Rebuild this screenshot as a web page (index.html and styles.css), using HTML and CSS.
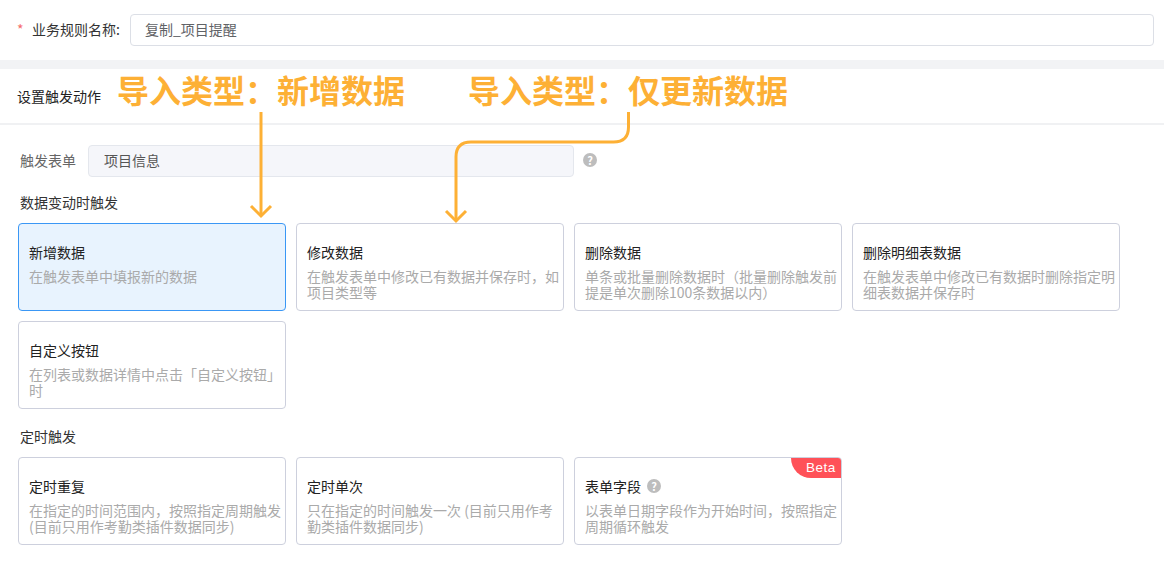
FILE: index.html
```html
<!DOCTYPE html>
<html lang="zh-CN">
<head>
<meta charset="utf-8">
<title>业务规则</title>
<link rel="stylesheet" href="styles.css">
</head>
<body>
<div class="page">
  <section class="name-row">
    <span class="req">*</span>
    <label class="name-label">业务规则名称:</label>
    <div class="name-input">复制_项目提醒</div>
  </section>
  <div class="band"></div>
  <header class="head">设置触发动作</header>
  <section class="body">
    <div class="form-row">
      <span class="form-label">触发表单</span>
      <div class="form-input">项目信息</div>
      <span class="help help-form">?</span>
    </div>
    <h3 class="group group-data">数据变动时触发</h3>
    <div class="cards">
      <div class="card active"><div class="title">新增数据</div><div class="desc">在触发表单中填报新的数据</div></div>
      <div class="card"><div class="title">修改数据</div><div class="desc">在触发表单中修改已有数据并保存时&#xFF0C;如项目类型等</div></div>
      <div class="card"><div class="title">删除数据</div><div class="desc">单条或批量删除数据时&#xFF08;批量删除触发前提是单次删除100条数据以内&#xFF09;</div></div>
      <div class="card"><div class="title">删除明细表数据</div><div class="desc">在触发表单中修改已有数据时删除指定明细表数据并保存时</div></div>
      <div class="card"><div class="title">自定义按钮</div><div class="desc">在列表或数据详情中点击「自定义按钮」时</div></div>
    </div>
    <h3 class="group group-timer">定时触发</h3>
    <div class="cards">
      <div class="card"><div class="title">定时重复</div><div class="desc">在指定的时间范围内&#xFF0C;按照指定周期触发 (目前只用作考勤类插件数据同步)</div></div>
      <div class="card"><div class="title">定时单次</div><div class="desc">只在指定的时间触发一次 (目前只用作考勤类插件数据同步)</div></div>
      <div class="card"><span class="beta">Beta</span><div class="title">表单字段<span class="help help-title">?</span></div><div class="desc">以表单日期字段作为开始时间&#xFF0C;按照指定周期循环触发</div></div>
    </div>
  </section>
  <div class="note note-a">导入类型&#xFF1A;新增数据</div>
  <div class="note note-b">导入类型&#xFF1A;仅更新数据</div>
  <svg class="arrows" width="1164" height="563" viewBox="0 0 1164 563" fill="none" stroke="#fdb035" stroke-width="3">
    <path d="M261 112V216"/>
    <path d="M251 206L261 216L271 206"/>
    <path d="M628.500 112V127Q628.500 142 613.500 142H471Q456 142 456 157V221"/>
    <path d="M446 211L456 221L466 211"/>
  </svg>
</div>
</body>
</html>
```
FILE: styles.css
```css
* { box-sizing: border-box; }
html, body { margin: 0; padding: 0; background: #fff; }
body { font-family: "Noto Sans CJK SC", "Noto Sans", sans-serif; font-size: 14px; color: #333; }
.page { position: relative; width: 1164px; height: 563px; overflow: hidden; }

.name-row { height: 60px; padding: 14px 10px 0 17px; display: flex; align-items: flex-start; }
.req { width: 15px; color: #f56c6c; line-height: 30px; font-size: 14px; }
.name-label { width: 98px; line-height: 30px; color: #333; }
.name-input { flex: 1; height: 32px; border: 1px solid #dcdfe6; border-radius: 4px; padding-left: 14px; line-height: 28px; color: #606266; }

.band { height: 9px; background: #f2f3f5; }
.head { height: 56px; padding-left: 17px; line-height: 54px; font-size: 14px; color: #222; border-bottom: 2px solid #f0f1f3; }

.body { padding: 20px 0 0 18px; }
.form-row { display: flex; align-items: flex-start; height: 32px; }
.form-label { width: 70px; padding-left: 2px; color: #666; line-height: 30px; }
.form-input { width: 486px; height: 32px; background: #f5f6fa; border: 1px solid #e4e7ed; border-radius: 4px; padding-left: 15px; line-height: 28px; color: #555; }
.help { display: inline-block; width: 14px; height: 14px; border-radius: 50%; background: #bdbdbd; color: #fff; font-size: 11px; font-weight: 700; line-height: 14px; text-align: center; }
.help-form { margin: 8px 0 0 9px; }
.help-title { margin-left: 6px; }

.group { margin: 0; padding-left: 2px; font-size: 14px; font-weight: 400; line-height: 20px; color: #333; }
.group-data { margin-top: 15px; }
.group-timer { margin-top: 17px; }
.cards { margin-top: 11px; display: flex; flex-wrap: wrap; gap: 10px; width: 1112px; }

.card { position: relative; width: 268px; height: 88px; padding: 18px 3px 0 10px; border: 1px solid #cdd0dd; border-radius: 4px; overflow: hidden; }
.card.active { background: #e8f3fe; border-color: #3a97f5; }
.title { display: flex; align-items: center; height: 20px; color: #222; line-height: 20px; }
.desc { margin-top: 6px; color: #aaa; line-height: 16px; font-size: 14px; }
.beta { position: absolute; top: 0; right: 0; width: 50px; height: 20px; padding-left: 15px; background: #ff5158; border-bottom-left-radius: 20px; color: #fff; font-family: "Liberation Sans", sans-serif; font-size: 13.500px; line-height: 20px; letter-spacing: .5px; }

.note { position: absolute; top: 67px; font-size: 32px; font-weight: 700; line-height: 44px; color: #fdb035; white-space: nowrap; }
.note-a { left: 117px; }
.note-b { left: 468px; }
.arrows { position: absolute; left: 0; top: 0; pointer-events: none; }
```
